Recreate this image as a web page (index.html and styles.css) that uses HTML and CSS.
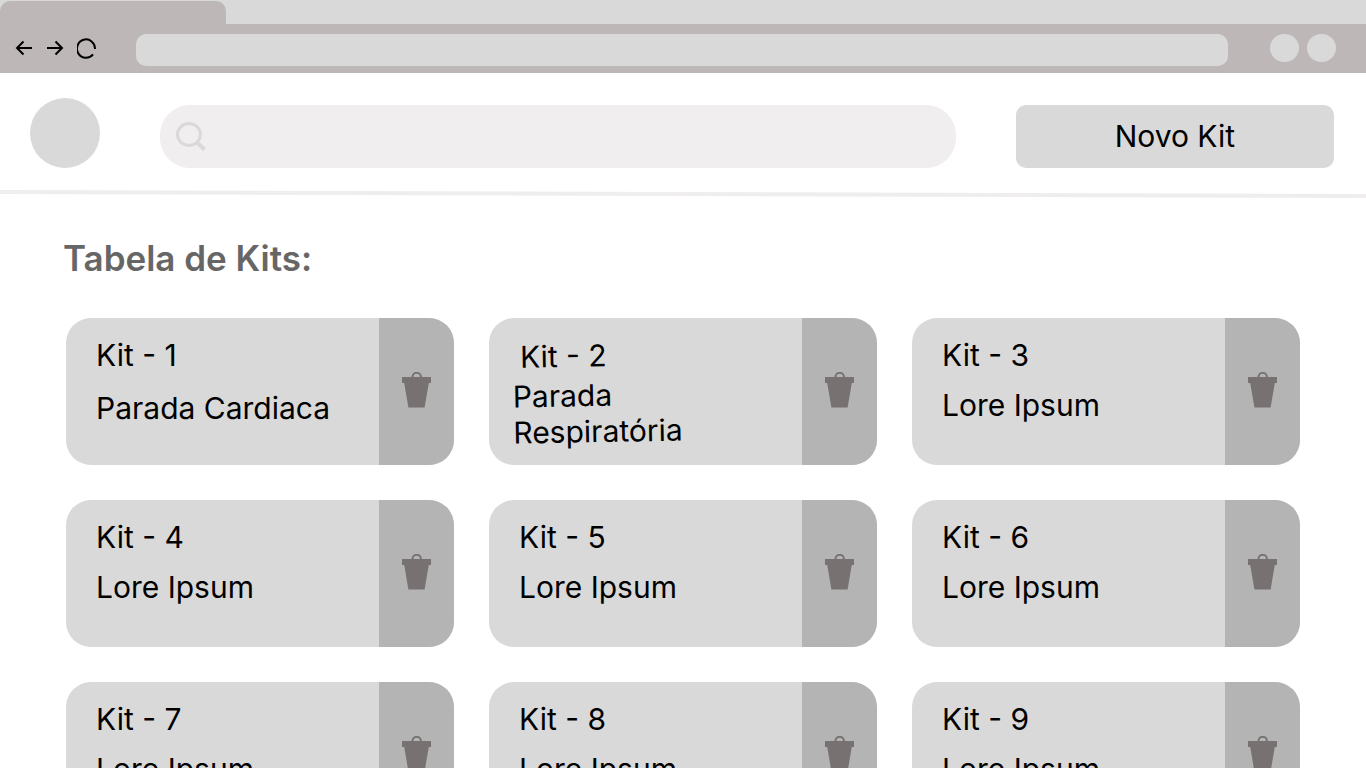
FILE: index.html
```html
<!DOCTYPE html>
<html lang="pt-BR">
<head>
  <meta charset="utf-8">
  <meta name="viewport" content="width=device-width, initial-scale=1">
  <title>Tabela de Kits</title>
  <link rel="stylesheet" href="styles.css">
</head>
<body>
  <svg class="sprite" aria-hidden="true">
    <symbol id="trash" viewBox="0 0 29 36">
      <path d="M10.500 6v-1a4.200 4.200 0 0 1 8.400 0v1" fill="none" stroke="#787171" stroke-width="2"/>
      <path d="M0 5h29v6h-2.200l-4.200 24.500h-16.200l-4.200-24.500h-2.200z" fill="#787171"/>
    </symbol>
  </svg>
  <div class="window">
    <div class="tabs"><div class="tab"></div></div>
    <div class="toolbar">
      <nav class="nav">
        <button type="button" aria-label="Voltar"><svg width="18" height="18" viewBox="0 0 18 18"><path d="M17 9H2M8.500 2.500L2 9l6.500 6.500"/></svg></button>
        <button type="button" aria-label="Avançar"><svg width="18" height="18" viewBox="0 0 18 18"><path d="M1 9h15M9.500 2.500L16 9l-6.500 6.500"/></svg></button>
        <button type="button" aria-label="Recarregar"><svg width="20" height="22" viewBox="0 0 20 22"><path d="M18 12A9 9.200 0 1 0 16 17.400"/></svg></button>
      </nav>
      <input class="address" type="text" aria-label="Endereço">
      <div class="actions">
        <button type="button" aria-label="Perfil"></button>
        <button type="button" aria-label="Menu"></button>
      </div>
    </div>
    <header class="header">
      <div class="avatar"></div>
      <label class="search">
        <svg width="32" height="30" viewBox="0 0 32 30" aria-hidden="true"><ellipse cx="14" cy="12.500" rx="11.500" ry="11"/><path d="M21 19.500l8.500 8" class="handle"/></svg>
        <input type="search" aria-label="Buscar kits">
      </label>
      <button type="button" class="new-kit">Novo Kit</button>
    </header>
    <svg class="divider" viewBox="0 0 1366 8" preserveAspectRatio="none" aria-hidden="true"><path d="M0 2L1366 6"/></svg>
    <main class="content">
      <h1 class="title">Tabela de Kits:</h1>
      <div class="grid">
        <article class="card card-roomy">
          <div class="info"><h2>Kit - 1</h2><p>Parada Cardiaca</p></div>
          <button type="button" class="delete" aria-label="Excluir Kit 1"><svg><use href="#trash"/></svg></button>
        </article>
        <article class="card card-tilted">
          <div class="info"><h2>Kit - 2</h2><p>Parada<br>Respiratória</p></div>
          <button type="button" class="delete" aria-label="Excluir Kit 2"><svg><use href="#trash"/></svg></button>
        </article>
        <article class="card">
          <div class="info"><h2>Kit - 3</h2><p>Lore Ipsum</p></div>
          <button type="button" class="delete" aria-label="Excluir Kit 3"><svg><use href="#trash"/></svg></button>
        </article>
        <article class="card">
          <div class="info"><h2>Kit - 4</h2><p>Lore Ipsum</p></div>
          <button type="button" class="delete" aria-label="Excluir Kit 4"><svg><use href="#trash"/></svg></button>
        </article>
        <article class="card">
          <div class="info"><h2>Kit - 5</h2><p>Lore Ipsum</p></div>
          <button type="button" class="delete" aria-label="Excluir Kit 5"><svg><use href="#trash"/></svg></button>
        </article>
        <article class="card">
          <div class="info"><h2>Kit - 6</h2><p>Lore Ipsum</p></div>
          <button type="button" class="delete" aria-label="Excluir Kit 6"><svg><use href="#trash"/></svg></button>
        </article>
        <article class="card">
          <div class="info"><h2>Kit - 7</h2><p>Lore Ipsum</p></div>
          <button type="button" class="delete" aria-label="Excluir Kit 7"><svg><use href="#trash"/></svg></button>
        </article>
        <article class="card">
          <div class="info"><h2>Kit - 8</h2><p>Lore Ipsum</p></div>
          <button type="button" class="delete" aria-label="Excluir Kit 8"><svg><use href="#trash"/></svg></button>
        </article>
        <article class="card">
          <div class="info"><h2>Kit - 9</h2><p>Lore Ipsum</p></div>
          <button type="button" class="delete" aria-label="Excluir Kit 9"><svg><use href="#trash"/></svg></button>
        </article>
      </div>
    </main>
  </div>
</body>
</html>
```
FILE: styles.css
```css
* { box-sizing: border-box; }

body {
  margin: 0;
  background: #fff;
  color: #000;
  font-family: Inter, "Liberation Sans", sans-serif;
  font-size: 30px;
  line-height: 36px;
}

button, input {
  margin: 0;
  padding: 0;
  border: 0;
  background: none;
  color: inherit;
  font: inherit;
}

button { cursor: pointer; }

.sprite { position: absolute; width: 0; height: 0; }

.window {
  display: flex;
  flex-direction: column;
  height: 100vh;
  overflow: hidden;
}

/* Browser bar */
.tabs {
  flex: none;
  padding-top: 1px;
  background: #d9d9d9;
}

.tab {
  width: 226px;
  height: 23px;
  border-radius: 10px 10px 0 0;
  background: #beb7b7;
}

.toolbar {
  display: flex;
  flex: none;
  align-items: flex-start;
  padding: 10px 30px 7px 15px;
  background: #beb7b7;
}

.nav {
  display: flex;
  align-items: center;
  gap: 13px;
  width: 121px;
  height: 28px;
}

.nav button { display: flex; }

.nav svg {
  fill: none;
  stroke: #000;
  stroke-width: 2;
}

.address {
  flex: 1;
  min-width: 0;
  height: 32px;
  padding: 0 12px;
  border-radius: 10px;
  background: #d9d9d9;
  font-size: 16px;
}

.actions {
  display: flex;
  gap: 8px;
  margin-left: 42px;
}

.actions button {
  width: 29px;
  height: 28px;
  border-radius: 50%;
  background: #d9d9d9;
}

/* Page header */
.header {
  display: grid;
  flex: none;
  grid-template-columns: 70px 5fr 2fr;
  align-items: end;
  gap: 60px;
  padding: 25px 32px 22px 30px;
}

.avatar {
  height: 70px;
  border-radius: 50%;
  background: #d9d9d9;
}

.search {
  display: flex;
  align-items: center;
  gap: 12px;
  min-width: 0;
  height: 63px;
  padding: 0 24px 0 15px;
  border-radius: 30px;
  background: #f0eeef;
}

.search svg {
  flex: none;
  fill: none;
  stroke: #d9d9d9;
  stroke-width: 3;
}

.search .handle { stroke-width: 4; }

.search input {
  flex: 1;
  min-width: 0;
}

.new-kit {
  height: 63px;
  padding-bottom: 2px;
  border-radius: 10px;
  background: #d9d9d9;
}

.divider {
  display: block;
  flex: none;
  width: 100%;
  height: 8px;
}

.divider path {
  stroke: #efedee;
  stroke-width: 4;
}

/* Kit list */
.content {
  flex: 1;
  min-height: 0;
  padding: 38px 66px 35px;
  overflow-y: auto;
  scrollbar-width: none;
}

.title {
  margin: 0 -3px 38px;
  color: #666;
  font-size: 35px;
  font-weight: 600;
  line-height: 44px;
}

.grid {
  display: grid;
  grid-template-columns: repeat(3, 1fr);
  gap: 35px;
}

.card {
  display: flex;
  min-height: 147px;
  border-radius: 25px;
  background: #d9d9d9;
  overflow: hidden;
}

.info {
  display: flex;
  flex: 1;
  flex-direction: column;
  gap: 14px;
  min-width: 0;
  padding: 19px 20px 14px 30px;
}

.info h2, .info p {
  margin: 0;
  font-size: 30px;
  font-weight: 400;
}

.card-roomy .info { gap: 17px; }

.card-tilted .info {
  gap: 3px;
  padding: 20px 20px 14px 24px;
}

.card-tilted h2 { padding-left: 7px; }

.card-tilted h2, .card-tilted p {
  align-self: flex-start;
  transform: rotate(-1deg);
}

.delete {
  display: flex;
  flex: none;
  align-items: center;
  justify-content: center;
  width: 75px;
  padding-bottom: 3px;
  background: #b4b4b4;
}

.delete svg {
  width: 29px;
  height: 36px;
}
```
